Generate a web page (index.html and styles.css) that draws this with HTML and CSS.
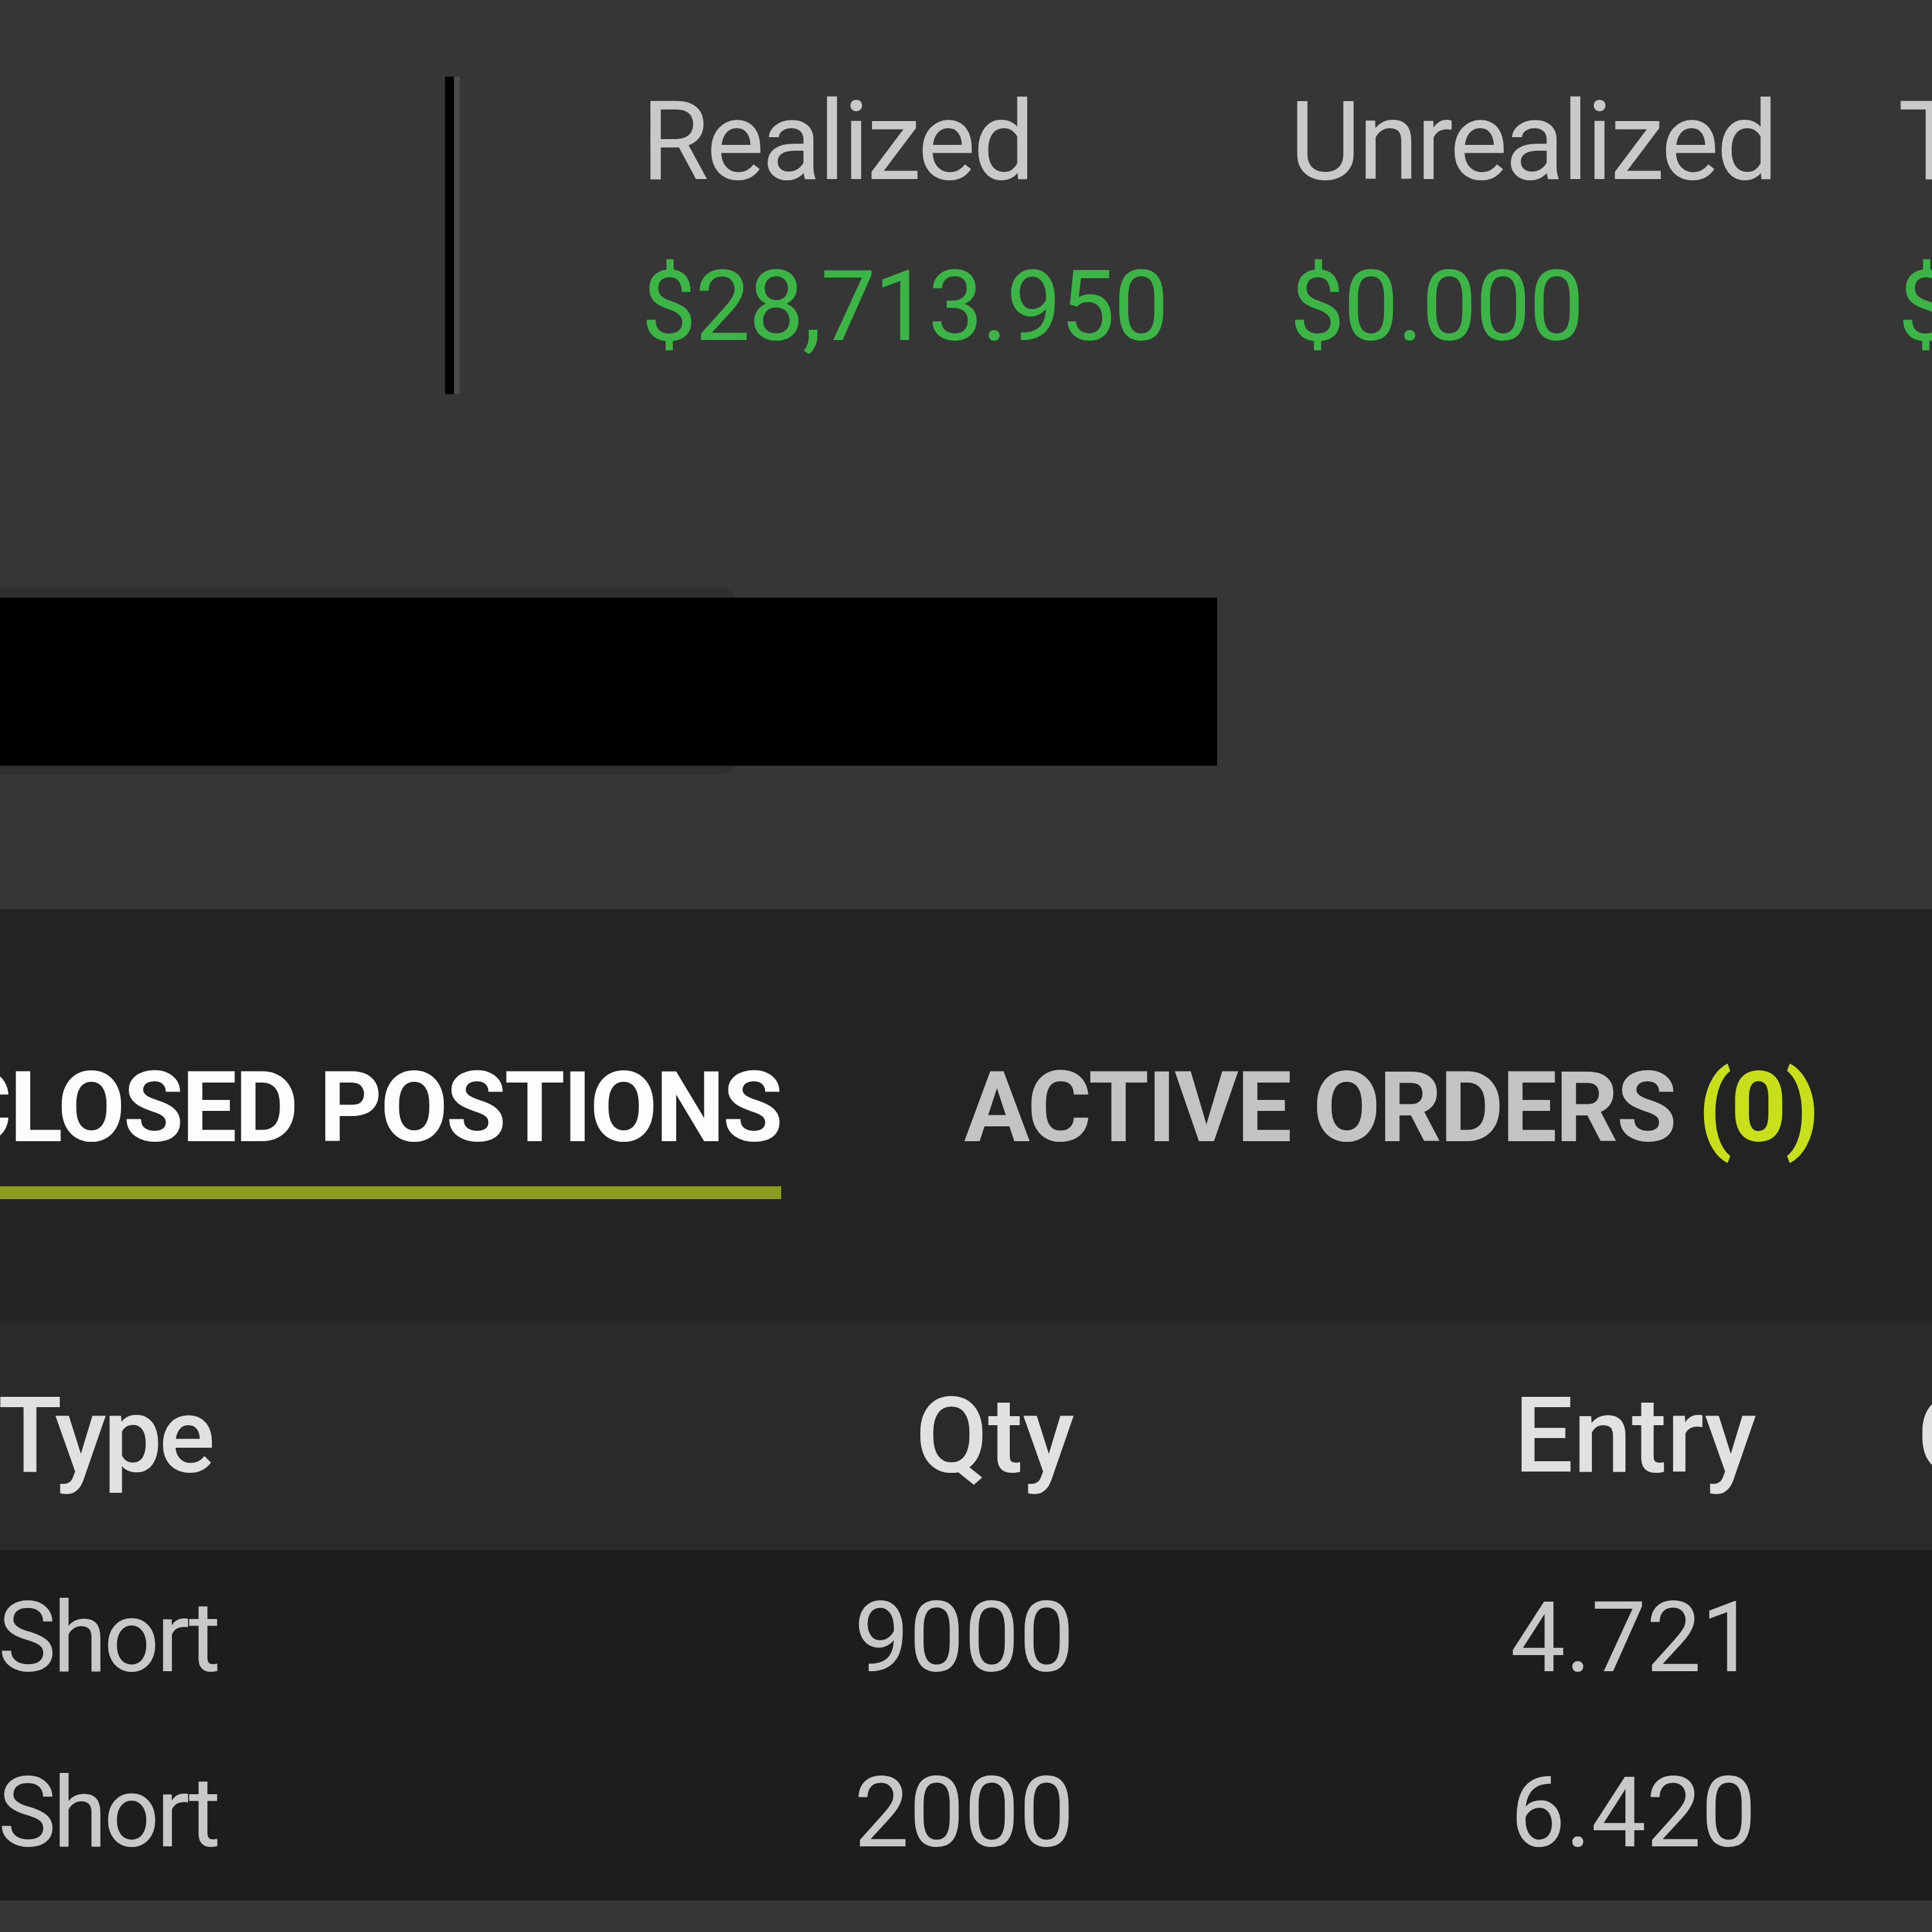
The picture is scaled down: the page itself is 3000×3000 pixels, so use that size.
FILE: index.html
```html
<!DOCTYPE html>
<html lang="en">
<head>
<meta charset="utf-8">
<title>Positions</title>
<link rel="stylesheet" href="styles.css">
</head>
<body>
<div class="page">
  <section class="summary">
    <div class="stats">
      <div class="divider"></div>
      <div class="stat-list">
        <div class="stat">
          <div class="stat-label">Realized</div>
          <div class="stat-value">$28,713.950</div>
        </div>
        <div class="stat">
          <div class="stat-label">Unrealized</div>
          <div class="stat-value">$0.000</div>
        </div>
        <div class="stat">
          <div class="stat-label">Total</div>
          <div class="stat-value">$28,713.950</div>
        </div>
      </div>
    </div>
    <div class="search-row">
      <div class="search-box"></div>
      <div class="redaction"></div>
    </div>
  </section>

  <section class="positions">
    <div class="tabs">
      <div class="tab tab-active"><span>CLOSED POSTIONS</span></div>
      <div class="tab">ACTIVE ORDERS <span class="count">(0)</span></div>
    </div>
    <div class="table">
      <div class="table-row table-head">
        <div class="cell cell-type">Type</div>
        <div class="cell num">Qty</div>
        <div class="cell num">Entry</div>
        <div class="cell col-close">Close</div>
      </div>
      <div class="table-row">
        <div class="cell cell-type">Short</div>
        <div class="cell num">9000</div>
        <div class="cell num">4.721</div>
        <div class="cell col-close"></div>
      </div>
      <div class="table-row">
        <div class="cell cell-type">Short</div>
        <div class="cell num">2000</div>
        <div class="cell num">6.420</div>
        <div class="cell col-close"></div>
      </div>
    </div>
  </section>
</div>
</body>
</html>
```

FILE: styles.css
```css
* {
  box-sizing: border-box;
  margin: 0;
  padding: 0;
}

html,
body {
  width: 3000px;
  height: 3000px;
  overflow: hidden;
  background: #353635;
  font-family: Roboto, "Liberation Sans", Arial, sans-serif;
}

.page {
  width: 3000px;
  height: 3000px;
  overflow: hidden;
  display: flex;
  flex-direction: column;
}

/* ---------- summary ---------- */
.summary {
  height: 1412px;
  flex: none;
  background: #353635;
  display: flex;
  flex-direction: column;
}

.stats {
  display: flex;
  align-items: flex-start;
  padding: 119px 0 0 691px;
}

.divider {
  flex: none;
  width: 23px;
  height: 493px;
  background: #000;
  border-right: 9px solid #4a4b4a;
}

.stat-list {
  display: flex;
  gap: 190px;
  margin: 16px 0 0 282px;
  white-space: nowrap;
}

.stat {
  display: flex;
  flex-direction: column;
}

.stat-label {
  font-size: 170px;
  line-height: 170px;
  letter-spacing: -4px;
  color: #c9c9c9;
}

.stat-value {
  margin-top: 95px;
  font-size: 152px;
  line-height: 152px;
  letter-spacing: -2px;
  color: #3db546;
}

.search-row {
  position: relative;
  margin-top: 301px;
  height: 289px;
}

.search-box {
  margin-left: -40px;
  width: 1183px;
  height: 289px;
  background: #2e2f2f;
  border-radius: 22px;
}

.redaction {
  position: absolute;
  left: 0;
  top: 15px;
  width: 1890px;
  height: 261px;
  background: #000;
}

/* ---------- positions ---------- */
.positions {
  height: 1539px;
  flex: none;
  background: #232323;
  display: flex;
  flex-direction: column;
}

.tabs {
  height: 639px;
  flex: none;
  display: flex;
  align-items: flex-start;
  gap: 284px;
  padding-top: 232px;
  white-space: nowrap;
}

.tab {
  flex: none;
  font-size: 152px;
  line-height: 152px;
  font-weight: 700;
  letter-spacing: -2.5px;
  color: #c3c3c3;
  padding-bottom: 46px;
  border-bottom: 20px solid transparent;
}

.tab-active {
  width: 1213px;
  display: flex;
  justify-content: flex-end;
  color: #fdfdfd;
  letter-spacing: -2.9px;
  border-bottom-color: #8b9b1f;
}

.count {
  color: #c8df1c;
}

.table {
  display: flex;
  flex-direction: column;
}

.table-row {
  display: grid;
  grid-template-columns: 1000px 668px 1059px 1273px;
  align-items: center;
  height: 272px;
  background: #1d1d1d;
  font-size: 152px;
  line-height: 152px;
  color: #c8c8c8;
  white-space: nowrap;
}

.table-head {
  height: 356px;
  background: #2a2a2a;
  font-size: 163px;
  line-height: 163px;
  font-weight: 500;
  color: #e1e1e1;
}

.cell-type {
  margin-left: -3px;
  letter-spacing: -5px;
}

.num {
  text-align: right;
}

.col-close {
  padding-left: 250px;
}
```
